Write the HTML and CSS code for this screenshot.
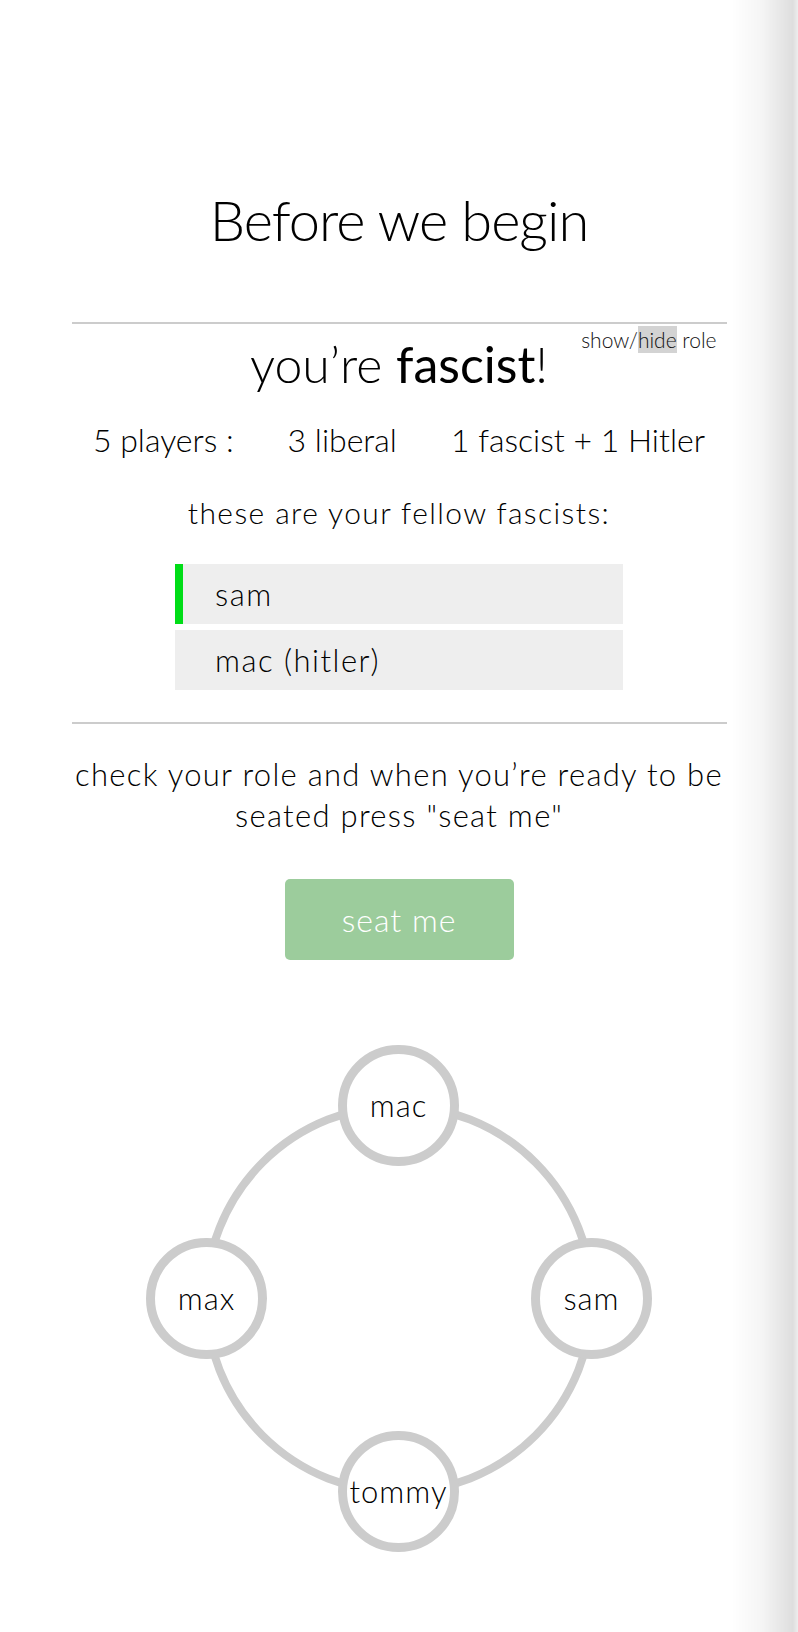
FILE: index.html
```html
<!DOCTYPE html>
<html lang="en">
<head>
<meta charset="utf-8">
<title>Before we begin</title>
<link rel="stylesheet" href="styles.css">
</head>
<body>
<main class="page">
  <h1 class="title">Before we begin</h1>
  <hr class="rule">
  <section class="role">
    <div class="toggle">show/<span class="toggle-hl">hide</span> role</div>
    <h2 class="role-title">you’re <strong>fascist</strong>!</h2>
    <div class="counts">
      <span>5 players :</span>
      <span>3 liberal</span>
      <span>1 fascist + 1 Hitler</span>
    </div>
    <p class="fellow">these are your fellow fascists:</p>
    <ul class="mates">
      <li class="mate mate-active">sam</li>
      <li class="mate">mac (hitler)</li>
    </ul>
  </section>
  <hr class="rule rule-second">
  <p class="instructions">check your role and when you’re ready to be<br>seated press "seat me"</p>
  <div class="actions">
    <button class="seat-btn" type="button">seat me</button>
  </div>
  <div class="table">
    <div class="ring"></div>
    <div class="seat seat-top">mac</div>
    <div class="seat seat-left">max</div>
    <div class="seat seat-right">sam</div>
    <div class="seat seat-bottom">tommy</div>
  </div>
</main>
<div class="edge-shadow"></div>
</body>
</html>
```

FILE: styles.css
```css
html, body {
  margin: 0;
  padding: 0;
  background: #fff;
}

body {
  font-family: "Lato", "Open Sans", sans-serif;
  font-weight: 300;
  color: #000;
}

.page {
  width: 655px;
  margin: 0 auto;
  padding-top: 187px;
  text-align: center;
}

.title {
  margin: 0;
  font-size: 56px;
  line-height: 66px;
  font-weight: 300;
  letter-spacing: -1px;
}

.rule {
  margin: 69px 0 0;
  border: 0;
  border-top: 2px solid #ccc;
  height: 0;
}

.rule-second {
  margin-top: 32px;
}

.role {
  position: relative;
  padding-top: 10px;
}

.toggle {
  position: absolute;
  top: 2px;
  right: 10px;
  font-size: 21px;
  line-height: 27px;
  color: #111;
}

.toggle-hl {
  background: #d3d3d3;
  padding: 1px 0;
}

.role-title {
  margin: 0;
  font-size: 50px;
  line-height: 60px;
  font-weight: 300;
}

.role-title strong {
  font-weight: 400;
}

.counts {
  margin-top: 26px;
  display: flex;
  justify-content: center;
  gap: 54px;
  font-size: 32px;
  line-height: 40px;
}

.fellow {
  margin: 34px 0 0;
  font-size: 30px;
  line-height: 36px;
  letter-spacing: 1.4px;
}

.mates {
  list-style: none;
  margin: 34px auto 0;
  padding: 0;
  width: 448px;
  display: flex;
  flex-direction: column;
  gap: 6px;
}

.mate {
  background: #eee;
  height: 60px;
  line-height: 60px;
  font-size: 31px;
  letter-spacing: 1.5px;
  text-align: left;
  padding-left: 40px;
  box-sizing: border-box;
}

.mate-active {
  border-left: 8px solid #00dd17;
  padding-left: 32px;
}

.instructions {
  margin: 30px 0 0;
  font-size: 31px;
  line-height: 41px;
  letter-spacing: 1.3px;
}

.actions {
  margin-top: 43px;
  display: flex;
  justify-content: center;
}

.seat-btn {
  width: 229px;
  height: 81px;
  border: 0;
  border-radius: 5px;
  background: #9ccc9c;
  color: #fff;
  font-family: inherit;
  font-weight: 300;
  font-size: 32px;
  letter-spacing: 1px;
  line-height: 81px;
  padding: 0;
}

.table {
  position: relative;
  width: 510px;
  height: 510px;
  margin: 84px auto 0;
}

.ring {
  position: absolute;
  left: 58px;
  top: 58px;
  width: 394px;
  height: 394px;
  box-sizing: border-box;
  border: 8px solid #ccc;
  border-radius: 50%;
}

.seat {
  position: absolute;
  width: 121px;
  height: 121px;
  box-sizing: border-box;
  border: 9px solid #ccc;
  border-radius: 50%;
  background: #fff;
  display: flex;
  align-items: center;
  justify-content: center;
  font-size: 31px;
  letter-spacing: 1px;
  line-height: 1;
}

.seat-top { left: 194px; top: 1px; }
.seat-left { left: 2px; top: 194px; }
.seat-right { left: 387px; top: 194px; }
.seat-bottom { left: 194px; top: 387px; }

.edge-shadow {
  position: fixed;
  top: 0;
  right: 0;
  width: 66px;
  height: 100%;
  background: linear-gradient(to right, rgba(0,0,0,0) 0, rgba(0,0,0,0.04) 45%, rgba(0,0,0,0.13) 92%, rgba(0,0,0,0.07) 100%);
  pointer-events: none;
}
```
